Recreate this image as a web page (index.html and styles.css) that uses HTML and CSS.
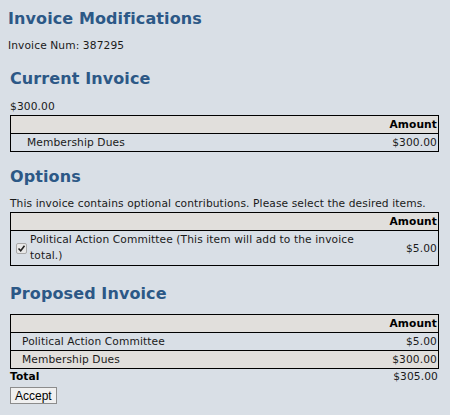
FILE: index.html
```html
<!DOCTYPE html>
<html>
<head>
    <meta charset="UTF-8">
    <title>Invoice Modifications</title>
    <link rel="stylesheet" href="styles.css">
</head>
<body>
    <h1 class="title">Invoice Modifications</h1>
    <p class="invoice-num">Invoice Num: 387295</p>

    <div class="section">
        <h2 class="current-head">Current Invoice</h2>
        <p class="balance">$300.00</p>
        <table class="items">
            <tr class="head">
                <th></th>
                <th class="amount">Amount</th>
            </tr>
            <tr>
                <td class="desc indent">Membership Dues</td>
                <td class="amount">$300.00</td>
            </tr>
        </table>

        <h2 class="options-head">Options</h2>
        <p class="note">This invoice contains optional contributions. Please select the desired items.</p>
        <table class="items">
            <tr class="head">
                <th></th>
                <th></th>
                <th class="amount">Amount</th>
            </tr>
            <tr>
                <td class="check"><input type="checkbox" class="box" checked></td>
                <td class="desc wrap">Political Action Committee (This item will add to the invoice total.)</td>
                <td class="amount">$5.00</td>
            </tr>
        </table>

        <h2 class="proposed-head">Proposed Invoice</h2>
        <table class="items proposed">
            <tr class="head">
                <th></th>
                <th class="amount">Amount</th>
            </tr>
            <tr>
                <td class="desc">Political Action Committee</td>
                <td class="amount">$5.00</td>
            </tr>
            <tr class="alt">
                <td class="desc">Membership Dues</td>
                <td class="amount">$300.00</td>
            </tr>
        </table>
        <div class="total">
            <strong>Total</strong>
            <span>$305.00</span>
        </div>
        <button class="accept">Accept</button>
    </div>
</body>
</html>
```

FILE: styles.css
```css
body {
    margin: 8px;
    background-color: #d9dfe6;
    font-family: "DejaVu Sans", Verdana, sans-serif;
    font-size: 10.67px;
    line-height: 15px;
    letter-spacing: 0.1px;
    color: #1a1a1a;
}
h1, h2 {
    color: #2c5886;
    font-size: 16px;
    line-height: 19px;
    font-weight: bold;
    letter-spacing: 0.1px;
    margin: 0;
}
p {
    margin: 0;
}
.title {
    margin-top: 1px;
}
.invoice-num {
    margin-top: 10px;
}
.section {
    margin: 0 3px 0 2px;
}
.current-head {
    margin-top: 16px;
}
.balance {
    margin-top: 11px;
}
.options-head {
    margin-top: 15px;
}
.note {
    margin-top: 10px;
}
.proposed-head {
    margin-top: 18px;
}
.items {
    width: 100%;
    border-collapse: collapse;
    border: 1px solid #000;
    margin-top: 1px;
}
.proposed {
    margin-top: 11px;
}
.items th, .items td {
    padding: 1px 1px;
    line-height: 15px;
    border-top: 1px solid #000;
    font-size: 10.67px;
}
.items .head {
    background-color: #e1dfdc;
}
.items th {
    font-weight: bold;
    height: 15px;
    color: #000;
}
.amount {
    text-align: right;
    white-space: nowrap;
}
.desc {
    text-align: left;
    padding-left: 11px !important;
}
.desc.indent {
    padding-left: 16px !important;
}
.alt {
    background-color: #e1dfdc;
}
.check {
    width: 12px;
    padding: 0 0 0 5px !important;
    vertical-align: middle;
}
.desc.wrap {
    line-height: 16px;
    padding-left: 2px !important;
    padding-right: 14px !important;
}
.box {
    -webkit-appearance: none;
    appearance: none;
    width: 11px;
    height: 11px;
    margin: 0;
    display: block;
    border: 1px solid #a9a9a9;
    border-radius: 2px;
    background: #e8e8e8 url("data:image/svg+xml;utf8,<svg xmlns='http://www.w3.org/2000/svg' width='9' height='9'><path d='M1.5 4.5 L3.7 6.7 L7.5 1.8' stroke='%23222' stroke-width='1.6' fill='none'/></svg>") center no-repeat;
}
.total {
    display: flex;
    justify-content: space-between;
    padding-right: 1px;
}
.total strong {
    color: #000;
}
.accept {
    margin-top: 3px;
    height: 17px;
    padding: 0 4px;
    font-family: "Liberation Sans", Arial, sans-serif;
    font-size: 12px;
    letter-spacing: 0;
    background-color: #f0f0f0;
    border: 1px solid #8c8c8c;
    border-radius: 0;
    color: #000;
}
```
